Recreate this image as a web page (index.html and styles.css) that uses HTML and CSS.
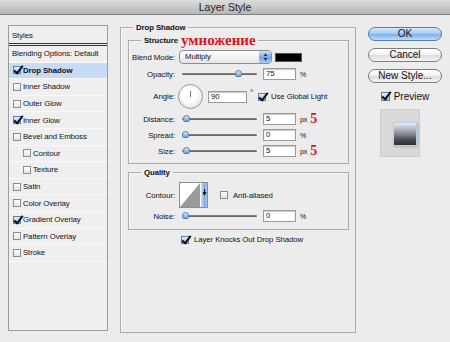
FILE: index.html
```html
<!DOCTYPE html>
<html>
<head>
	<meta charset="utf-8" />
	<link rel="stylesheet" href="styles.css">
</head>
<body>
<div class="window">
	<div class="titlebar">Layer Style</div>
	<div class="dialog">

		<div class="stylelist">
			<div class="listhead">Styles</div>
			<div class="item">Blending Options: Default</div>
			<div class="item sel"><span class="cb on"></span><b>Drop Shadow</b></div>
			<div class="item"><span class="cb"></span>Inner Shadow</div>
			<div class="item"><span class="cb"></span>Outer Glow</div>
			<div class="item"><span class="cb on"></span>Inner Glow</div>
			<div class="item"><span class="cb"></span>Bevel and Emboss</div>
			<div class="item sub"><span class="cb"></span>Contour</div>
			<div class="item sub"><span class="cb"></span>Texture</div>
			<div class="item"><span class="cb"></span>Satin</div>
			<div class="item"><span class="cb"></span>Color Overlay</div>
			<div class="item"><span class="cb on"></span>Gradient Overlay</div>
			<div class="item"><span class="cb"></span>Pattern Overlay</div>
			<div class="item"><span class="cb"></span>Stroke</div>
		</div>

		<div class="group outer">
			<span class="legend">Drop Shadow</span>

			<div class="group structure">
				<span class="legend">Structure</span>
				<span class="note">умножение</span>

				<div class="row blendrow">
					<span class="lbl">Blend Mode:</span>
					<div class="select">Multiply<span class="arrows"><i>&#9652;</i><i>&#9662;</i></span></div>
					<span class="swatch"></span>
				</div>
				<div class="row">
					<span class="lbl">Opacity:</span>
					<div class="slider"><span class="thumb" style="left: 53px"></span></div>
					<span class="field">75</span><span class="unit">%</span>
				</div>
				<div class="row anglerow">
					<span class="lbl">Angle:</span>
					<span class="dial"></span>
					<span class="field wide">90</span><span class="deg">&deg;</span>
					<span class="cb on"></span><span class="cbtext">Use Global Light</span>
				</div>
				<div class="row">
					<span class="lbl">Distance:</span>
					<div class="slider"><span class="thumb" style="left: 1px"></span></div>
					<span class="field">5</span><span class="unit">px</span><span class="five">5</span>
				</div>
				<div class="row">
					<span class="lbl">Spread:</span>
					<div class="slider"><span class="thumb" style="left: 0px"></span></div>
					<span class="field">0</span><span class="unit">%</span>
				</div>
				<div class="row">
					<span class="lbl">Size:</span>
					<div class="slider"><span class="thumb" style="left: 1px"></span></div>
					<span class="field">5</span><span class="unit">px</span><span class="five">5</span>
				</div>
			</div>

			<div class="group quality">
				<span class="legend">Quality</span>
				<div class="row contourrow">
					<span class="lbl">Contour:</span>
					<span class="contour">
						<svg width="29" height="26" viewBox="0 0 29 26">
							<rect x="0" y="0" width="22" height="26" fill="#fff"/>
							<polygon points="1,25 21,1 21,25" fill="#9a9a9a"/>
							<defs>
								<linearGradient id="cg" x1="0" y1="0" x2="1" y2="0">
									<stop offset="0" stop-color="#cfe2f7"/>
									<stop offset="0.5" stop-color="#7fb0e6"/>
									<stop offset="1" stop-color="#b9d6f4"/>
								</linearGradient>
							</defs>
							<rect x="22" y="0" width="7" height="26" fill="url(#cg)"/>
							<polygon points="23.5,10 27.5,10 25.5,14" fill="#111"/>
							<rect x="25" y="7" width="1" height="4" fill="#111"/>
						</svg>
					</span>
					<span class="cb"></span><span class="cbtext">Anti-aliased</span>
				</div>
				<div class="row">
					<span class="lbl">Noise:</span>
					<div class="slider"><span class="thumb" style="left: 0px"></span></div>
					<span class="field">0</span><span class="unit">%</span>
				</div>
			</div>

			<div class="knock"><span class="cb on"></span><span class="cbtext">Layer Knocks Out Drop Shadow</span></div>
		</div>

		<div class="side">
			<button type="button" class="mac ok">OK</button>
			<button type="button" class="mac">Cancel</button>
			<button type="button" class="mac">New Style...</button>
			<div class="preview"><span class="cb on"></span>Preview</div>
			<div class="previewbox"><span class="swatchprev"></span></div>
		</div>

	</div>
</div>
</body>
</html>
```
FILE: styles.css
```css
body {
	margin: 0;
	background-color: #ececec;
	font-family: "Liberation Sans", Arial, sans-serif;
	font-size: 7.8px;
	letter-spacing: -0.08px;
	color: #111;
	white-space: nowrap;
}

.window {
	width: 450px;
	height: 342px;
	background-color: #ececec;
}

.titlebar {
	height: 14px;
	border-bottom: 1px solid #828282;
	background: linear-gradient(#dcdcdc, #b6b6b6);
	text-align: center;
	font-size: 10.5px;
	letter-spacing: 0;
	line-height: 15px;
	color: #1e1e1e;
}

.dialog {
	display: flex;
	align-items: flex-start;
	padding: 10px 0 0 8px;
}

/* styles list on the left */
.stylelist {
	width: 100px;
	height: 306px;
	box-sizing: border-box;
	border: 1px solid #9c9c9c;
	background-color: #efefef;
}

.listhead {
	height: 20px;
	box-sizing: border-box;
	padding: 5px 0 0 3px;
	border-bottom: 3px double #333;
}

.item {
	height: 16.6px;
	box-sizing: border-box;
	display: flex;
	align-items: center;
	padding-left: 3px;
	border-bottom: 1px solid #f9f9f9;
}

.item .cb {
	margin: 0 2px 0 1px;
}

.item.sub {
	padding-left: 13px;
}

.item.sel {
	background-color: #c8dbf4;
}

/* checkboxes */
.cb {
	display: inline-block;
	position: relative;
	width: 8px;
	height: 8px;
	box-sizing: border-box;
	border: 1px solid #8d8d8d;
	background: linear-gradient(#ffffff, #e4e4e4);
	flex: none;
}

.cb.on {
	border-color: #5b7fae;
	background: linear-gradient(#e3effc, #95bdea);
}

.cb.on::after {
	content: "";
	position: absolute;
	left: 2px;
	top: -3px;
	width: 3px;
	height: 8px;
	border-right: 2px solid #111;
	border-bottom: 2px solid #111;
	transform: rotate(38deg);
}

/* group boxes */
.group {
	position: relative;
	box-sizing: border-box;
	border: 1px solid #ababab;
	box-shadow: inset 1px 1px 0 #f8f8f8;
}

.legend {
	position: absolute;
	top: -6px;
	padding: 0 3px;
	background-color: #ececec;
	font-weight: bold;
	line-height: 11px;
}

.outer {
	width: 236px;
	height: 306px;
	margin: 2px 0 0 12px;
	padding: 12px 6px 0 7px;
}

.outer > .legend {
	left: 12px;
}

.structure {
	height: 124px;
	display: flex;
	flex-direction: column;
	gap: 4px;
	padding-top: 9px;
}

.structure > .legend,
.quality > .legend {
	left: 12px;
}

.note {
	position: absolute;
	left: 50px;
	top: -8px;
	padding: 0 2px;
	background-color: #ececec;
	color: #e3121a;
	font-family: "Liberation Serif", "Times New Roman", serif;
	font-weight: bold;
	font-size: 15px;
	letter-spacing: 0;
	line-height: 14px;
}

.quality {
	height: 58px;
	margin-top: 8px;
	display: flex;
	flex-direction: column;
	gap: 2px;
	padding-top: 9px;
}

.row {
	display: flex;
	align-items: center;
	height: 12px;
}

.lbl {
	width: 46px;
	text-align: right;
	flex: none;
}

.blendrow {
	height: 14px;
}

.select {
	position: relative;
	width: 93px;
	height: 14px;
	box-sizing: border-box;
	margin-left: 4px;
	padding-left: 5px;
	border: 1px solid #8e8e8e;
	border-radius: 4px;
	background: linear-gradient(#ffffff, #e6e6e6);
	line-height: 12px;
	overflow: hidden;
}

.arrows {
	position: absolute;
	right: 0;
	top: 0;
	width: 12px;
	height: 12px;
	background: linear-gradient(#cfe3f9, #6fa6e4 55%, #a9cdf3);
	display: flex;
	flex-direction: column;
	align-items: center;
	font-size: 6px;
	line-height: 5px;
	padding-top: 1px;
	box-sizing: border-box;
}

.arrows i {
	font-style: normal;
	color: #1a1a1a;
}

.swatch {
	width: 27px;
	height: 9px;
	margin-left: 3px;
	box-sizing: border-box;
	border: 1px solid #555;
	background-color: #000;
}

.slider {
	position: relative;
	width: 75px;
	height: 12px;
	margin-left: 7px;
	flex: none;
}

.slider::before {
	content: "";
	position: absolute;
	left: 0;
	right: 0;
	top: 5px;
	height: 2px;
	border-radius: 1px;
	background: linear-gradient(#8a8a8a, #5d5d5d);
}

.thumb {
	position: absolute;
	top: 2px;
	width: 7px;
	height: 7px;
	box-sizing: border-box;
	border: 1px solid #4f7fb8;
	border-radius: 4px 4px 2px 2px;
	background: linear-gradient(#d5e7fb, #6ea5e3);
}

.field {
	width: 33px;
	height: 12px;
	box-sizing: border-box;
	margin-left: 6px;
	padding-left: 2px;
	border: 1px solid #9a9a9a;
	box-shadow: inset 0 1px 1px #c8c8c8;
	background-color: #fff;
	line-height: 10px;
	flex: none;
}

.field.wide {
	width: 39px;
	margin-left: 5px;
}

.unit {
	margin-left: 4px;
	font-size: 7px;
}

.deg {
	margin-left: 3px;
	width: 8px;
	align-self: flex-start;
	margin-top: 4px;
	font-size: 8px;
}

.five {
	margin-left: 3px;
	color: #e3121a;
	font-family: "Liberation Serif", "Times New Roman", serif;
	font-weight: bold;
	font-size: 14px;
	letter-spacing: 0;
	line-height: 12px;
}

.anglerow {
	height: 25px;
}

.dial {
	position: relative;
	width: 25px;
	height: 25px;
	margin-left: 3px;
	box-sizing: border-box;
	border: 1px solid #9a9a9a;
	border-radius: 50%;
	background: radial-gradient(circle at 45% 40%, #ffffff 35%, #d9d9d9 100%);
	flex: none;
}

.dial::after {
	content: "";
	position: absolute;
	left: 11px;
	top: 6px;
	width: 1px;
	height: 6px;
	background-color: #777;
}

.cbtext {
	margin-left: 5px;
}

.contourrow {
	height: 26px;
}

.contour {
	width: 29px;
	height: 26px;
	margin-left: 4px;
	margin-right: 12px;
	box-sizing: border-box;
	border: 1px solid #8e8e8e;
	line-height: 0;
	overflow: hidden;
	flex: none;
}

.contour svg {
	margin: -1px 0 0 -1px;
}

.knock {
	display: flex;
	align-items: center;
	margin: 5px 0 0 53px;
	height: 9px;
}

/* buttons on the right */
.side {
	width: 74px;
	margin: 2px 0 0 12px;
	display: flex;
	flex-direction: column;
	align-items: center;
}

.mac {
	width: 74px;
	height: 14px;
	margin: 0 0 7px;
	padding: 0;
	border: 1px solid #7d7d7d;
	border-radius: 8px;
	background: linear-gradient(#ffffff, #f0f0f0 50%, #dcdcdc 51%, #f4f4f4);
	font-family: "Liberation Sans", Arial, sans-serif;
	font-size: 10px;
	line-height: 12px;
	color: #111;
}

.mac.ok {
	border-color: #5a7ca8;
	background: linear-gradient(#d6e8fb, #a5c9f1 50%, #7bb0ea 51%, #bfdcf8);
}

.preview {
	display: flex;
	align-items: center;
	font-size: 10px;
	letter-spacing: 0;
	height: 12px;
}

.preview .cb {
	width: 9px;
	height: 9px;
	margin-right: 4px;
}

.previewbox {
	width: 40px;
	height: 48px;
	margin: 7px 10px 0 0;
	box-sizing: border-box;
	border: 1px solid #cdcdcd;
	background-color: #d9d9d9;
	display: flex;
	padding: 12px 0 0 12px;
}

.swatchprev {
	width: 24px;
	height: 24px;
	box-sizing: border-box;
	border: 1px solid #b8cfe6;
	background: linear-gradient(#e2eef8, #8f959d 45%, #4a4c50 75%, #2f3032);
	box-shadow: 1px 1px 2px rgba(0, 0, 0, 0.2);
}
```
